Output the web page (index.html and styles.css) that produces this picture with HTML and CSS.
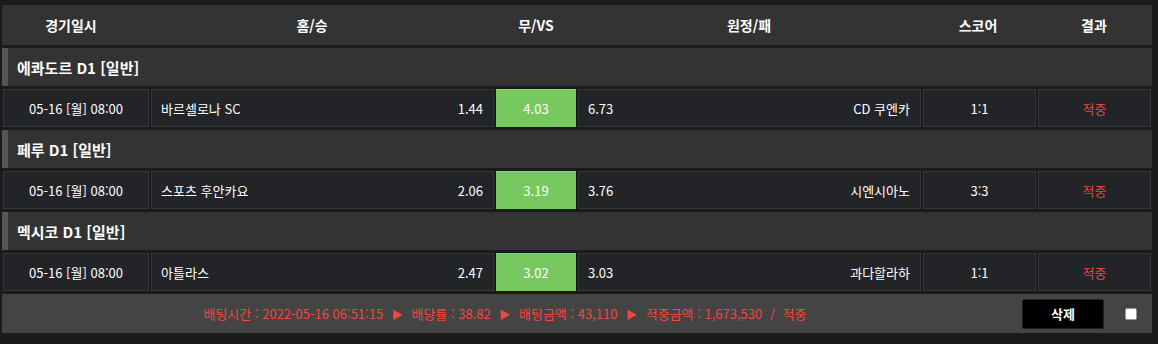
FILE: index.html
```html
<!DOCTYPE html>
<html lang="ko">
<head>
<meta charset="utf-8">
<link rel="stylesheet" href="styles.css">
</head>
<body>
<div class="board">
  <div class="head">
    <div>경기일시</div>
    <div>홈/승</div>
    <div>무/VS</div>
    <div>원정/패</div>
    <div>스코어</div>
    <div>결과</div>
  </div>

  <div class="league">에콰도르 D1 [일반]</div>
  <div class="row">
    <div class="cell date">05-16 [월] 08:00</div>
    <div class="cell home"><span>바르셀로나 SC</span><span>1.44</span></div>
    <div class="cell draw">4.03</div>
    <div class="cell away"><span>6.73</span><span>CD 쿠엔카</span></div>
    <div class="cell score">1:1</div>
    <div class="cell result">적중</div>
  </div>

  <div class="league">페루 D1 [일반]</div>
  <div class="row">
    <div class="cell date">05-16 [월] 08:00</div>
    <div class="cell home"><span>스포츠 후안카요</span><span>2.06</span></div>
    <div class="cell draw">3.19</div>
    <div class="cell away"><span>3.76</span><span>시엔시아노</span></div>
    <div class="cell score">3:3</div>
    <div class="cell result">적중</div>
  </div>

  <div class="league">멕시코 D1 [일반]</div>
  <div class="row">
    <div class="cell date">05-16 [월] 08:00</div>
    <div class="cell home"><span>아틀라스</span><span>2.47</span></div>
    <div class="cell draw">3.02</div>
    <div class="cell away"><span>3.03</span><span>과다할라하</span></div>
    <div class="cell score">1:1</div>
    <div class="cell result">적중</div>
  </div>

  <div class="summary">
    <div class="info">배팅시간 : 2022-05-16 06:51:15 <span class="arrow">▶</span> 배당률 : 38.82 <span class="arrow">▶</span> 배팅금액 : 43,110 <span class="arrow">▶</span> 적중금액 : 1,673,530 <span class="slash">/</span> 적중</div>
    <button class="del">삭제</button>
    <span class="check"></span>
  </div>
</div>
</body>
</html>
```

FILE: styles.css
```css
* { box-sizing: border-box; }
html, body { margin: 0; padding: 0; }
body {
  background: #1b1b1b;
  font-family: "Noto Sans CJK KR", "Noto Sans", sans-serif;
  color: #fff;
  width: 1158px;
  height: 344px;
  overflow: hidden;
}
.board {
  margin: 5px 6px 0 2px;
  display: flex;
  flex-direction: column;
  gap: 3px;
}
.head {
  height: 40px;
  background: #333;
  display: grid;
  grid-template-columns: 138px 344px 104px 322px 136px 96px 1fr;
  align-items: center;
  font-weight: bold;
  font-size: 14px;
  text-align: center;
}
.league {
  height: 38px;
  background: #333;
  border-left: 6px solid #555;
  padding-left: 9px;
  display: flex;
  align-items: center;
  font-weight: bold;
  font-size: 15px;
}
.row {
  height: 38px;
  display: grid;
  grid-template-columns: 146px 343px 80px 343px 113px 113px;
  gap: 2px;
  padding-left: 1px;
  font-size: 13px;
}
.cell {
  background: #232427;
  border: 1px solid #363739;
  display: flex;
  align-items: center;
}
.date, .score, .result { justify-content: center; }
.home, .away { justify-content: space-between; }
.home { padding: 0 10px 0 9px; }
.away { padding: 0 10px 0 9px; }
.draw {
  background: #77c95f;
  border-color: #88d670 #77c95f #77c95f;
  justify-content: center;
}
.result { color: #f5433a; }
.summary {
  height: 39px;
  background: #444;
  display: flex;
  align-items: center;
}
.info {
  flex: 1;
  text-align: center;
  color: #f0483e;
  font-size: 13px;
  white-space: pre;
  padding-right: 14px;
}
.arrow { font-size: 11px; margin: 0 5px; }
.slash { margin: 0 4px; }
.del {
  width: 82px;
  height: 30px;
  background: #000;
  border: 1px solid #222;
  border-radius: 2px;
  color: #fff;
  font-family: inherit;
  font-weight: bold;
  font-size: 13px;
  margin-right: 21px;
  padding: 0;
}
.check {
  width: 12px;
  height: 12px;
  background: #fff;
  border: 1px solid #999;
  border-radius: 2px;
  margin-right: 15px;
}
```
